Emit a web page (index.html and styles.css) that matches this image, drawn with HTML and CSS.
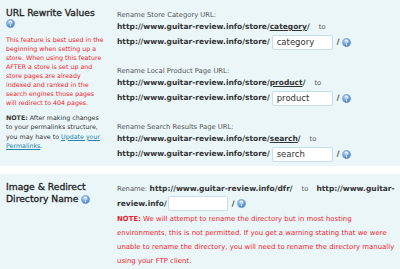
FILE: index.html
```html
<!DOCTYPE html>
<html lang="en">
<head>
    <meta charset="UTF-8">
    <title>Store Settings</title>
    <link rel="stylesheet" href="styles.css">
</head>
<body>

    <div class="form-table">
        <div class="row">
            <div class="side">
                <h3>URL Rewrite Values</h3>
                <div class="help help-block"><svg viewBox="0 0 10 10"><use href="#q"/></svg></div>
                <p class="warn">This feature is best used in the beginning when setting up a store. When using this feature AFTER a store is set up and store pages are already indexed and ranked in the search engines those pages will redirect to 404 pages.</p>
                <p class="note"><b>NOTE:</b> After making changes to your permalinks structure, you may have to <a href="#">Update your Permalinks</a>.</p>
            </div>
            <div class="main">
                <div class="field">
                    <p class="lbl">Rename Store Category URL:</p>
                    <p class="url"><b>http://www.guitar-review.info/store/<u>category</u>/</b><span class="to">to</span></p>
                    <p class="edit"><b>http://www.guitar-review.info/store/</b><input type="text" value="category"><b class="sl">/</b><span class="help"><svg viewBox="0 0 10 10"><use href="#q"/></svg></span></p>
                </div>
                <div class="field">
                    <p class="lbl">Rename Local Product Page URL:</p>
                    <p class="url"><b>http://www.guitar-review.info/store/<u>product</u>/</b><span class="to">to</span></p>
                    <p class="edit"><b>http://www.guitar-review.info/store/</b><input type="text" value="product"><b class="sl">/</b><span class="help"><svg viewBox="0 0 10 10"><use href="#q"/></svg></span></p>
                </div>
                <div class="field">
                    <p class="lbl">Rename Search Results Page URL:</p>
                    <p class="url"><b>http://www.guitar-review.info/store/<u>search</u>/</b><span class="to">to</span></p>
                    <p class="edit"><b>http://www.guitar-review.info/store/</b><input type="text" value="search"><b class="sl">/</b><span class="help"><svg viewBox="0 0 10 10"><use href="#q"/></svg></span></p>
                </div>
            </div>
        </div>

        <div class="row">
            <div class="side">
                <h3 class="h-two">Image &amp; Redirect Directory Name <span class="help"><svg viewBox="0 0 10 10"><use href="#q"/></svg></span></h3>
            </div>
            <div class="main main-two">
                <p class="dir"><span class="lbl-in">Rename:</span> <b>http://www.guitar-review.info/dfr/</b><span class="to">to</span><b>http://www.guitar-review.info/</b><input type="text" class="short" value=""><b class="sl">/</b><span class="help"><svg viewBox="0 0 10 10"><use href="#q"/></svg></span></p>
                <p class="dir-note"><b>NOTE:</b> We will attempt to rename the directory but in most hosting environments, this is not permitted. If you get a warning stating that we were unable to rename the directory, you will need to rename the directory manually using your FTP client.</p>
            </div>
        </div>
    </div>

    <svg width="0" height="0" class="defs">
        <defs>
            <radialGradient id="g" cx="40%" cy="30%" r="70%">
                <stop offset="0" stop-color="#c4dcf4"/>
                <stop offset="1" stop-color="#3f7cc4"/>
            </radialGradient>
            <g id="q">
                <circle cx="5" cy="5" r="4.6" fill="url(#g)" stroke="#7ea6d6" stroke-width="0.6"/>
                <path d="M3.6 3.9 Q3.7 2.5 5.1 2.5 Q6.5 2.6 6.4 3.8 Q6.3 4.6 5.4 5 Q5 5.3 5 6" fill="none" stroke="#fff" stroke-width="1.1"/>
                <circle cx="5" cy="7.4" r="0.65" fill="#fff"/>
            </g>
        </defs>
    </svg>

</body>
</html>
```

FILE: styles.css
```css
body {
    margin: 0;
    background: #fff;
    font-family: "DejaVu Sans", sans-serif;
    color: #333;
}
p {
    margin: 0;
}
.defs {
    position: absolute;
}
.row {
    display: grid;
    grid-template-columns: 111px 1fr;
    background: #eaf6f8;
}
.row + .row {
    margin-top: 8px;
}
.side {
    padding: 8px 6px 0 6px;
}
.main {
    padding: 9px 0 3px 6px;
}
h3 {
    margin: 0;
    font-size: 9.2px;
    line-height: 10px;
    font-weight: normal;
    color: #222;
    -webkit-text-stroke: 0.3px #222;
}
.help {
    display: inline-block;
    width: 9px;
    height: 9px;
    vertical-align: middle;
    -webkit-text-stroke: 0;
}
.help svg {
    display: block;
    width: 9px;
    height: 9px;
}
.help-block {
    display: block;
    margin-top: 1px;
}
.warn {
    margin-top: 7px;
    font-size: 6.3px;
    line-height: 9px;
    color: #f21d2d;
}
.note {
    margin-top: 6px;
    font-size: 6.3px;
    line-height: 9.3px;
    color: #333;
}
.note a {
    color: #2583ad;
}
.field {
    margin-bottom: 14px;
}
.field:last-child {
    margin-bottom: 0;
}
.lbl {
    font-size: 6.8px;
    line-height: 12px;
    color: #555;
}
.lbl-in {
    font-size: 6.8px;
    color: #555;
}
.url,
.edit {
    font-size: 7.5px;
    line-height: 12px;
    color: #333;
}
.edit {
    display: flex;
    align-items: center;
    height: 18px;
}
.to {
    font-size: 6.8px;
    color: #555;
    margin: 0 8px 0 9px;
}
input {
    width: 61px;
    height: 15px;
    box-sizing: border-box;
    margin: 0 0 0 2px;
    padding: 0 4px;
    border: 1px solid #c9dcee;
    border-radius: 2px;
    background: #fff;
    font-family: "DejaVu Sans", sans-serif;
    font-size: 8.5px;
    color: #333;
}
.sl {
    margin: 0 3px 0 4px;
}
.main-two {
    padding: 8px 0 6px 6px;
}
.h-two {
    line-height: 12px;
    margin-top: -1px;
}
.dir {
    font-size: 7.5px;
    line-height: 14px;
}
.dir input {
    vertical-align: middle;
    height: 15px;
    width: 60px;
    margin-left: 1px;
}
.dir-note {
    margin-top: 1px;
    font-size: 6.93px;
    line-height: 14px;
    color: #f21d2d;
}
```
